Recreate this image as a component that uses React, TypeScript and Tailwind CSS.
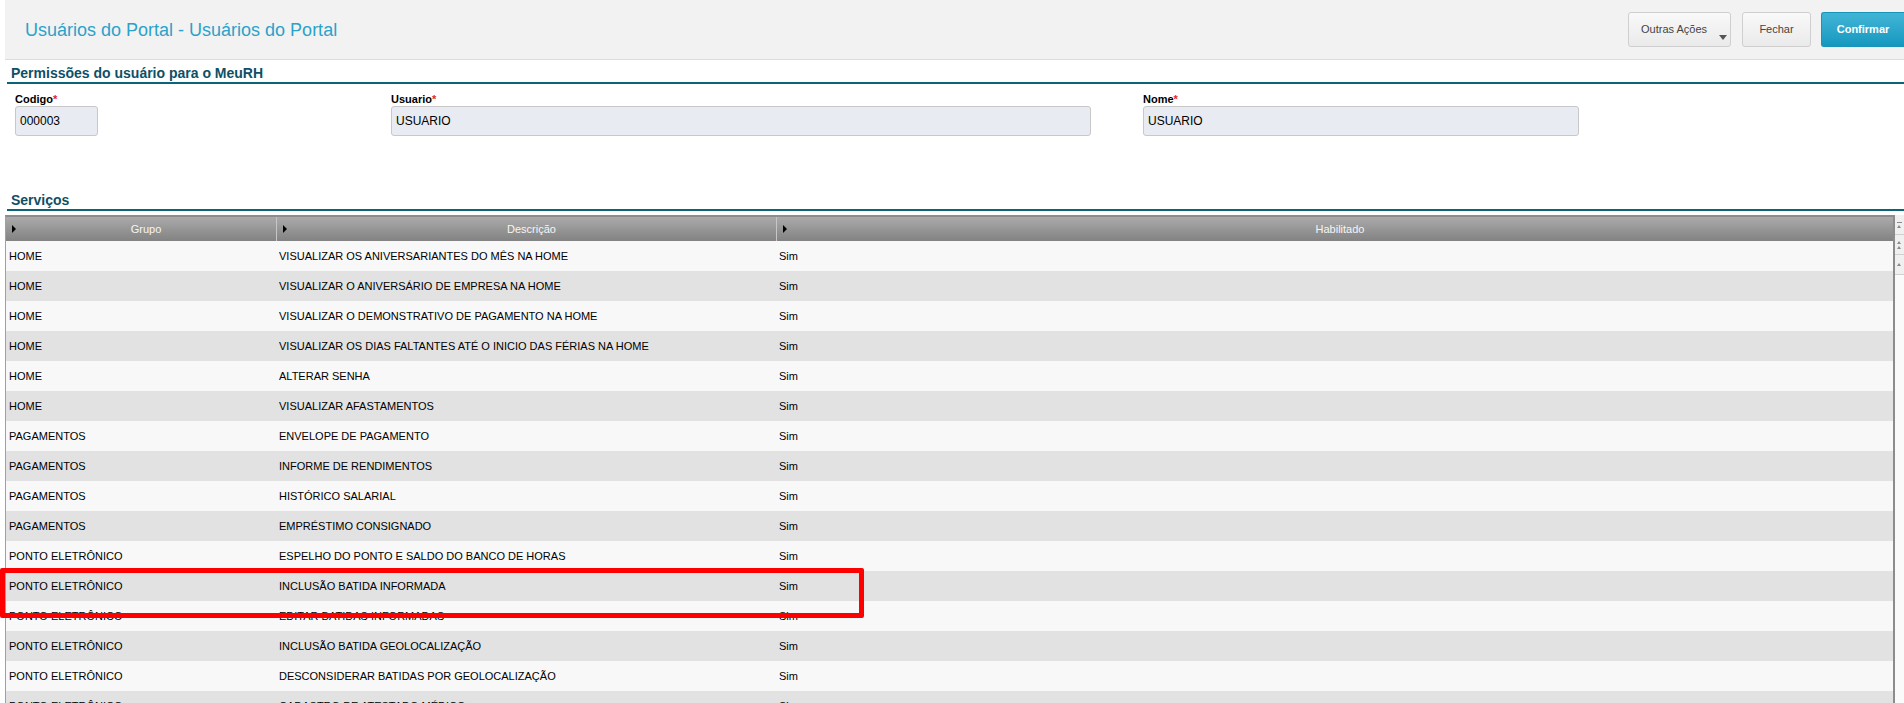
const rows: [string, string][] = [
  ["HOME", "VISUALIZAR OS ANIVERSARIANTES DO MÊS NA HOME"],
  ["HOME", "VISUALIZAR O ANIVERSÁRIO DE EMPRESA NA HOME"],
  ["HOME", "VISUALIZAR O DEMONSTRATIVO DE PAGAMENTO NA HOME"],
  ["HOME", "VISUALIZAR OS DIAS FALTANTES ATÉ O INICIO DAS FÉRIAS NA HOME"],
  ["HOME", "ALTERAR SENHA"],
  ["HOME", "VISUALIZAR AFASTAMENTOS"],
  ["PAGAMENTOS", "ENVELOPE DE PAGAMENTO"],
  ["PAGAMENTOS", "INFORME DE RENDIMENTOS"],
  ["PAGAMENTOS", "HISTÓRICO SALARIAL"],
  ["PAGAMENTOS", "EMPRÉSTIMO CONSIGNADO"],
  ["PONTO ELETRÔNICO", "ESPELHO DO PONTO E SALDO DO BANCO DE HORAS"],
  ["PONTO ELETRÔNICO", "INCLUSÃO BATIDA INFORMADA"],
  ["PONTO ELETRÔNICO", "EDITAR BATIDAS INFORMADAS"],
  ["PONTO ELETRÔNICO", "INCLUSÃO BATIDA GEOLOCALIZAÇÃO"],
  ["PONTO ELETRÔNICO", "DESCONSIDERAR BATIDAS POR GEOLOCALIZAÇÃO"],
  ["PONTO ELETRÔNICO", "CADASTRO DE ATESTADO MÉDICO"],
];

function HeadCell({ label, first }: { label: string; first?: boolean }) {
  return (
    <div
      className={`flex h-full items-center ${first ? "" : "border-l border-[#c6c6c6]"}`}
    >
      <span className="ml-[6px] h-0 w-0 border-y-[4px] border-l-[4px] border-y-transparent border-l-black" />
      <span className="flex-1 text-center text-[11px] text-[#f5f5f5]">{label}</span>
    </div>
  );
}

function Field({ label, value, w, ml }: { label: string; value: string; w: string; ml: string }) {
  return (
    <div className={`${w} ${ml} flex flex-col`}>
      <div className="h-[12px] text-[11px] font-bold leading-[11px] text-black">
        {label}
        <span className="text-[#e0262b]">*</span>
      </div>
      <div className="flex h-[30px] items-center rounded-[3px] border border-[#c8c8c8] bg-[#e8ebf1] px-[4px] text-[12px] text-black">
        {value}
      </div>
    </div>
  );
}

function ScrollBtn({ children }: { children: React.ReactNode }) {
  return (
    <div className="flex h-[20px] flex-col items-start justify-center gap-[2px] border-b border-[#d0d0d0] bg-[#f0f0f0] pl-[2px]">
      {children}
    </div>
  );
}

function Up() {
  return <span className="h-0 w-0 border-x-[2px] border-b-[3px] border-x-transparent border-b-[#8a8a8a]" />;
}

export default function App() {
  return (
    <div className="relative h-[703px] w-[1904px] overflow-hidden bg-white font-['Liberation_Sans',Arial,sans-serif] text-black">
      {/* Header */}
      <header className="ml-[5px] flex h-[60px] items-center justify-between border-b border-[#dcdcdc] bg-[#f2f2f2]">
        <h1 className="pl-[20px] text-[18px] leading-none text-[#2aa2ca]">
          Usuários do Portal - Usuários do Portal
        </h1>
        <div className="flex items-center">
          <button className="relative h-[35px] w-[103px] rounded-[3px] border border-[#cfcfcf] bg-linear-to-b from-[#f9f9f9] to-[#eaeaea] pl-[12px] text-left text-[11px] text-[#444]">
            Outras Ações
            <span className="absolute bottom-[6px] right-[3px] h-0 w-0 border-x-[4px] border-t-[5px] border-x-transparent border-t-[#555]" />
          </button>
          <button className="ml-[11px] h-[35px] w-[69px] rounded-[3px] border border-[#cfcfcf] bg-linear-to-b from-[#f9f9f9] to-[#eaeaea] text-[11px] text-[#444]">
            Fechar
          </button>
          <button className="ml-[10px] h-[35px] w-[83px] rounded-l-[3px] border border-r-0 border-[#1a93b8] bg-linear-to-b from-[#40b5d6] to-[#1298bf] text-[11px] font-bold text-white">
            Confirmar
          </button>
        </div>
      </header>

      {/* Permissões section */}
      <div className="ml-[7px] h-[24px] border-b-2 border-[#0b6478] pl-[4px] pt-[6px]">
        <h2 className="text-[14px] font-bold leading-[14px] text-[#0e4f66]">
          Permissões do usuário para o MeuRH
        </h2>
      </div>

      <div className="mt-[10px] flex">
        <Field label="Codigo" value="000003" w="w-[83px]" ml="ml-[15px]" />
        <Field label="Usuario" value="USUARIO" w="w-[700px]" ml="ml-[293px]" />
        <Field label="Nome" value="USUARIO" w="w-[436px]" ml="ml-[52px]" />
      </div>

      {/* Serviços section */}
      <div className="ml-[7px] mt-[51px] h-[24px] border-b-2 border-[#0b6478] pl-[4px] pt-[6px]">
        <h2 className="text-[14px] font-bold leading-[14px] text-[#0e4f66]">Serviços</h2>
      </div>

      <div className="ml-[5px] mt-[4px] flex">
        <div className="flex-1 border-l border-r-2 border-t-2 border-l-[#a0a0a0] border-r-[#8c8c8c] border-t-[#8c8c8c]">
          <div className="grid h-[24px] grid-cols-[270px_500px_1fr] bg-linear-to-b from-[#ababab] to-[#828282]">
            <HeadCell label="Grupo" first />
            <HeadCell label="Descrição" />
            <HeadCell label="Habilitado" />
          </div>
          {rows.map(([g, d], i) => (
            <div
              key={i}
              className={`grid h-[30px] grid-cols-[270px_500px_1fr] items-center text-[11px] text-black ${
                i % 2 === 0 ? "bg-[#f8f8f8]" : "bg-[#e2e2e2]"
              }`}
            >
              <div className="pl-[3px]">{g}</div>
              <div className="pl-[3px]">{d}</div>
              <div className="pl-[3px]">Sim</div>
            </div>
          ))}
        </div>
        <div className="w-[9px] bg-[#fafafa]">
          <ScrollBtn>
            <span className="h-px w-[5px] bg-[#8a8a8a]" />
            <Up />
          </ScrollBtn>
          <ScrollBtn>
            <Up />
            <Up />
          </ScrollBtn>
          <ScrollBtn>
            <Up />
          </ScrollBtn>
        </div>
      </div>

      {/* Highlight overlay */}
      <div className="pointer-events-none absolute left-0 top-[568px] h-[50px] w-[864px] rounded-[2px] border-[5px] border-[#ff0000]" />
    </div>
  );
}
